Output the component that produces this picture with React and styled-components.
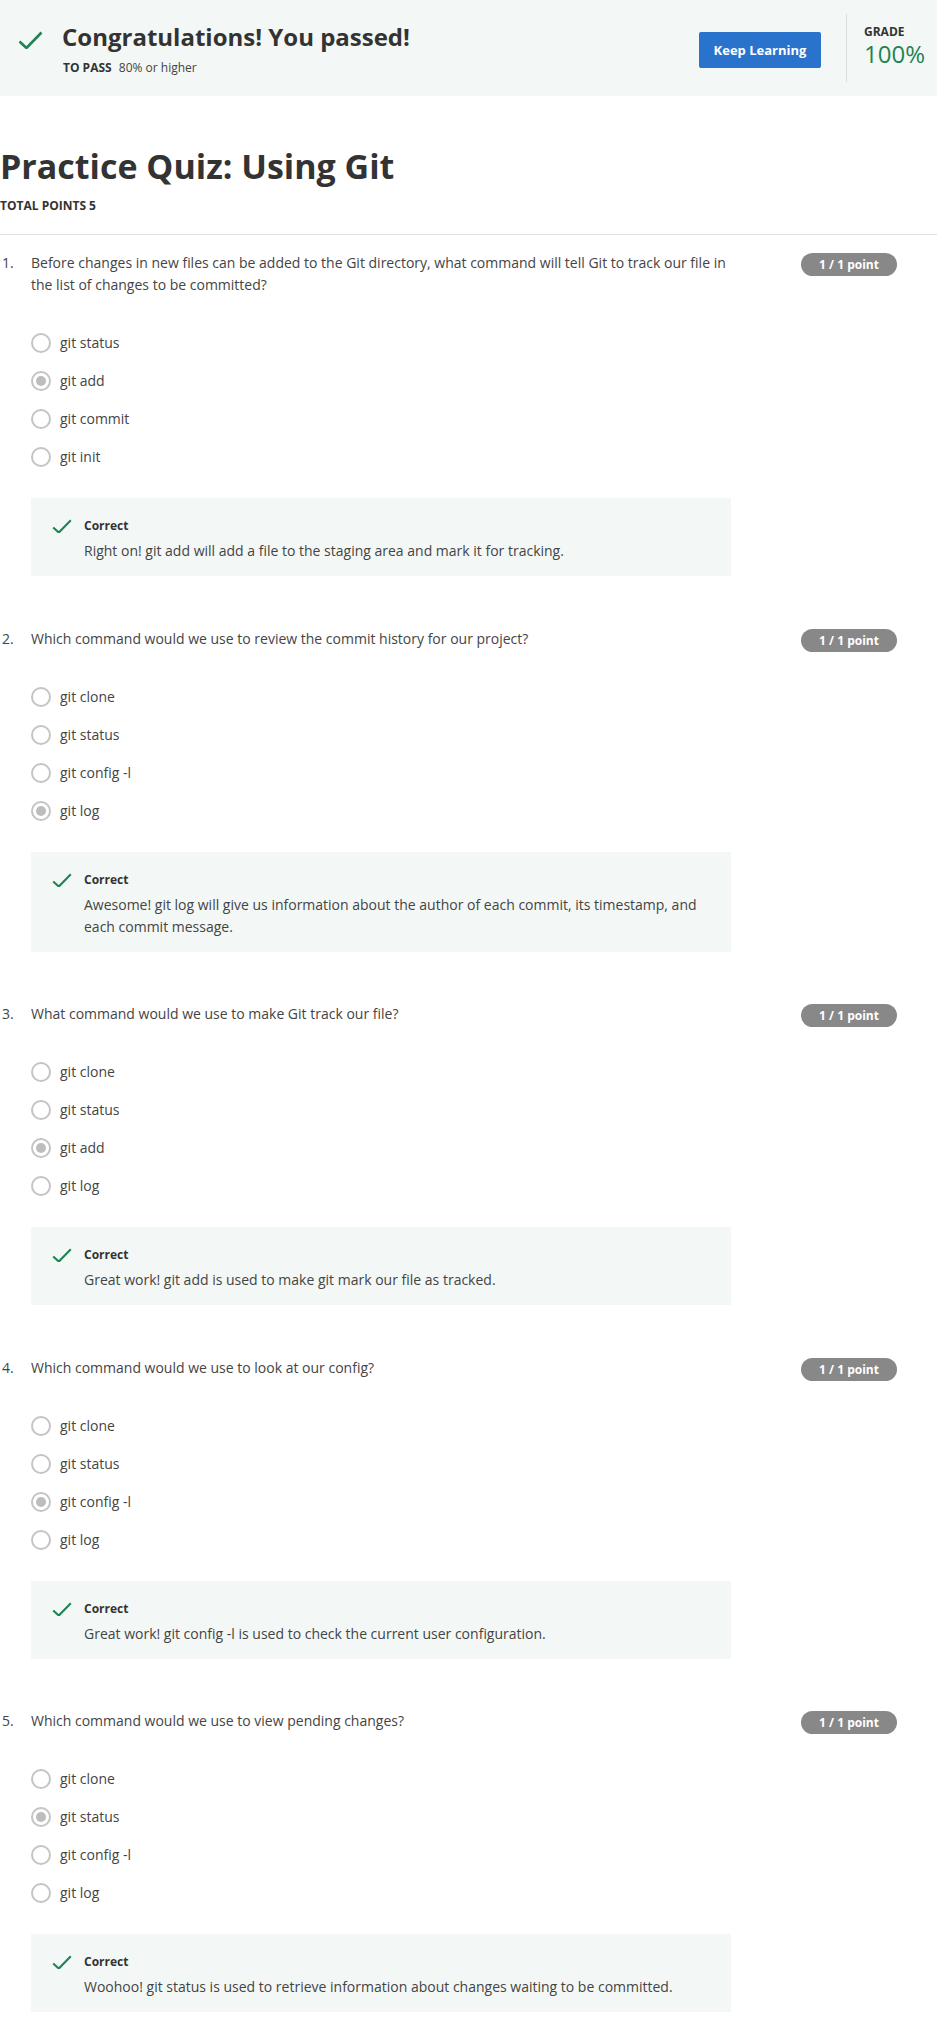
import React from 'react';
import styled, { createGlobalStyle } from 'styled-components';

const GlobalStyle = createGlobalStyle`
  body {
    margin: 0;
    background: #fff;
    font-family: "Open Sans", "Noto Sans", Arial, sans-serif;
    color: #333;
  }
`;

const questions = [
  {
    id: 1,
    text: 'Before changes in new files can be added to the Git directory, what command will tell Git to track our file in the list of changes to be committed?',
    options: ['git status', 'git add', 'git commit', 'git init'],
    selected: 1,
    feedback: 'Right on! git add will add a file to the staging area and mark it for tracking.',
  },
  {
    id: 2,
    text: 'Which command would we use to review the commit history for our project?',
    options: ['git clone', 'git status', 'git config -l', 'git log'],
    selected: 3,
    feedback: 'Awesome! git log will give us information about the author of each commit, its timestamp, and each commit message.',
  },
  {
    id: 3,
    text: 'What command would we use to make Git track our file?',
    options: ['git clone', 'git status', 'git add', 'git log'],
    selected: 2,
    feedback: 'Great work! git add is used to make git mark our file as tracked.',
  },
  {
    id: 4,
    text: 'Which command would we use to look at our config?',
    options: ['git clone', 'git status', 'git config -l', 'git log'],
    selected: 2,
    feedback: 'Great work! git config -l is used to check the current user configuration.',
  },
  {
    id: 5,
    text: 'Which command would we use to view pending changes?',
    options: ['git clone', 'git status', 'git config -l', 'git log'],
    selected: 1,
    feedback: 'Woohoo! git status is used to retrieve information about changes waiting to be committed.',
  },
];

const Check = ({ size = 25 }) => (
  <svg width={size} height={size * 0.72} viewBox="0 0 25 18" fill="none">
    <path d="M1.5 10.5 L8.5 17 L23.5 1.5" stroke="#1f8354" strokeWidth="2.6" />
  </svg>
);

const App = () => (
  <Page>
    <GlobalStyle />
    <Banner>
      <BannerIcon>
        <Check size={25} />
      </BannerIcon>
      <BannerText>
        <BannerTitle>Congratulations! You passed!</BannerTitle>
        <PassLine>
          <strong>TO PASS</strong> 80% or higher
        </PassLine>
      </BannerText>
      <KeepButton>Keep Learning</KeepButton>
      <Divider />
      <Grade>
        <GradeLabel>GRADE</GradeLabel>
        <GradeValue>100%</GradeValue>
      </Grade>
    </Banner>

    <Title>Practice Quiz: Using Git</Title>
    <TotalPoints>TOTAL POINTS 5</TotalPoints>
    <Rule />

    {questions.map((q) => (
      <Question key={q.id}>
        <Number>{q.id}.</Number>
        <Body>
          <Prompt>{q.text}</Prompt>
          <Options>
            {q.options.map((opt, i) => (
              <Option key={opt}>
                <Radio checked={i === q.selected} />
                <span>{opt}</span>
              </Option>
            ))}
          </Options>
          <Feedback>
            <FeedbackIcon>
              <Check size={20} />
            </FeedbackIcon>
            <div>
              <FeedbackLabel>Correct</FeedbackLabel>
              <FeedbackText>{q.feedback}</FeedbackText>
            </div>
          </Feedback>
        </Body>
        <Points>1 / 1 point</Points>
      </Question>
    ))}
  </Page>
);

export default App;

const Page = styled.div`
  width: 937px;
  padding-bottom: 12px;
`;

const Banner = styled.header`
  display: flex;
  align-items: center;
  height: 96px;
  padding: 0 12px 0 18px;
  background: #f3f8f6;
  box-sizing: border-box;
`;

const BannerIcon = styled.div`
  display: flex;
  align-self: flex-start;
  margin-top: 31px;
  margin-right: 19px;
`;

const BannerText = styled.div`
  flex: 1;
  align-self: flex-start;
  padding-top: 21px;
`;

const BannerTitle = styled.h1`
  margin: 0;
  font-size: 24px;
  line-height: 32px;
  font-weight: 700;
  color: #333;
`;

const PassLine = styled.div`
  margin-top: 7px;
  font-size: 12px;
  line-height: 16px;
  color: #444;
  padding-left: 1px;

  strong {
    font-weight: 700;
    color: #333;
    margin-right: 4px;
  }
`;

const KeepButton = styled.button`
  width: 122px;
  height: 36px;
  margin-top: 3px;
  border: none;
  border-radius: 2px;
  background: #2a73cc;
  color: #fff;
  font-family: "Open Sans", Arial, sans-serif;
  font-size: 13px;
  font-weight: 700;
  cursor: pointer;
`;

const Divider = styled.div`
  width: 1px;
  height: 68px;
  margin: 0 17px 0 25px;
  background: #dcdfde;
`;

const Grade = styled.div`
  display: flex;
  flex-direction: column;
  align-self: flex-start;
  padding-top: 24px;
  width: 61px;
`;

const GradeLabel = styled.div`
  font-size: 12px;
  line-height: 16px;
  font-weight: 700;
  color: #333;
`;

const GradeValue = styled.div`
  font-size: 24px;
  line-height: 28px;
  font-weight: 400;
  color: #1f8354;
`;

const Title = styled.h2`
  margin: 50px 0 0;
  font-size: 34px;
  line-height: 41px;
  font-weight: 700;
  color: #333;
`;

const TotalPoints = styled.div`
  margin-top: 11px;
  font-size: 12px;
  line-height: 16px;
  font-weight: 700;
  color: #333;
`;

const Rule = styled.hr`
  margin: 20px 0 0;
  border: none;
  border-top: 1px solid #e0e0e0;
`;

const Question = styled.section`
  display: grid;
  grid-template-columns: 31px 700px 1fr;
  margin-top: 17px;
  padding-bottom: 34.5px;
  font-size: 14px;
  line-height: 22px;
`;

const Number = styled.div`
  padding-left: 2px;
  color: #444;
`;

const Body = styled.div`
  display: flex;
  flex-direction: column;
`;

const Prompt = styled.p`
  margin: 0;
  color: #444;
`;

const Options = styled.div`
  display: flex;
  flex-direction: column;
  margin-top: 28px;
`;

const Option = styled.label`
  display: flex;
  align-items: center;
  height: 38px;
  gap: 9px;
  color: #444;
`;

const Radio = styled.span`
  position: relative;
  width: 20px;
  height: 20px;
  border-radius: 50%;
  border: 2px solid #c4c4c4;
  box-sizing: border-box;
  flex-shrink: 0;

  &::after {
    content: '';
    display: ${(p) => (p.checked ? 'block' : 'none')};
    position: absolute;
    inset: 3px;
    border-radius: 50%;
    background: #bdbdbd;
  }
`;

const Feedback = styled.div`
  display: flex;
  margin-top: 22px;
  padding: 20px 24px 14px 21px;
  background: #f3f8f6;
`;

const FeedbackIcon = styled.div`
  display: flex;
  padding-top: 1px;
  margin-right: 12px;
`;

const FeedbackLabel = styled.div`
  font-size: 12px;
  line-height: 16px;
  font-weight: 700;
  color: #333;
`;

const FeedbackText = styled.div`
  margin-top: 6px;
  color: #444;
`;

const Points = styled.div`
  justify-self: end;
  width: 96px;
  height: 23px;
  margin-top: 1px;
  margin-right: 40px;
  border-radius: 12px;
  background: #888;
  color: #fff;
  font-size: 12px;
  line-height: 23px;
  font-weight: 700;
  text-align: center;
`;
